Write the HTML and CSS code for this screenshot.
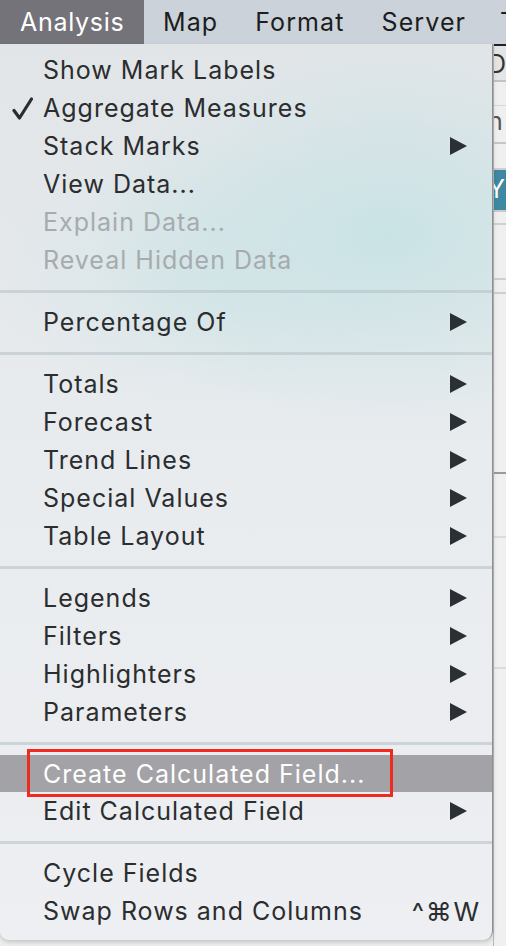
FILE: index.html
```html
<!DOCTYPE html>
<html>
<head>
<meta charset="utf-8">
<link rel="stylesheet" href="styles.css">
</head>
<body>
<div class="menubar">
  <div class="mb-item active">Analysis</div>
  <div class="mb-item">Map</div>
  <div class="mb-item">Format</div>
  <div class="mb-item">Server</div>
  <div class="mb-item cut">T</div>
</div>
<div class="main">
  <div class="menu">
    <div class="group">
      <div class="row"><span class="check"></span><span class="label">Show Mark Labels</span><span class="right"></span></div>
      <div class="row"><span class="check"><svg width="21" height="24" viewBox="0 0 21 24"><path d="M2 13.5 L7.5 21 L19.5 2" fill="none" stroke="#2a2d30" stroke-width="3.2" stroke-linecap="round" stroke-linejoin="round"/></svg></span><span class="label">Aggregate Measures</span><span class="right"></span></div>
      <div class="row"><span class="check"></span><span class="label">Stack Marks</span><span class="right"><i class="arrow"></i></span></div>
      <div class="row"><span class="check"></span><span class="label">View Data...</span><span class="right"></span></div>
      <div class="row disabled"><span class="check"></span><span class="label">Explain Data...</span><span class="right"></span></div>
      <div class="row disabled"><span class="check"></span><span class="label">Reveal Hidden Data</span><span class="right"></span></div>
    </div>
    <div class="sep"></div>
    <div class="group">
      <div class="row"><span class="check"></span><span class="label">Percentage Of</span><span class="right"><i class="arrow"></i></span></div>
    </div>
    <div class="sep"></div>
    <div class="group">
      <div class="row"><span class="check"></span><span class="label">Totals</span><span class="right"><i class="arrow"></i></span></div>
      <div class="row"><span class="check"></span><span class="label">Forecast</span><span class="right"><i class="arrow"></i></span></div>
      <div class="row"><span class="check"></span><span class="label">Trend Lines</span><span class="right"><i class="arrow"></i></span></div>
      <div class="row"><span class="check"></span><span class="label">Special Values</span><span class="right"><i class="arrow"></i></span></div>
      <div class="row"><span class="check"></span><span class="label">Table Layout</span><span class="right"><i class="arrow"></i></span></div>
    </div>
    <div class="sep"></div>
    <div class="group">
      <div class="row"><span class="check"></span><span class="label">Legends</span><span class="right"><i class="arrow"></i></span></div>
      <div class="row"><span class="check"></span><span class="label">Filters</span><span class="right"><i class="arrow"></i></span></div>
      <div class="row"><span class="check"></span><span class="label">Highlighters</span><span class="right"><i class="arrow"></i></span></div>
      <div class="row"><span class="check"></span><span class="label">Parameters</span><span class="right"><i class="arrow"></i></span></div>
    </div>
    <div class="sep"></div>
    <div class="group">
      <div class="row selected"><span class="check"></span><span class="label">Create Calculated Field...</span><span class="right"></span><span class="annot"></span></div>
      <div class="row"><span class="check"></span><span class="label">Edit Calculated Field</span><span class="right"><i class="arrow"></i></span></div>
    </div>
    <div class="sep"></div>
    <div class="group">
      <div class="row"><span class="check"></span><span class="label">Cycle Fields</span><span class="right"></span></div>
      <div class="row"><span class="check"></span><span class="label">Swap Rows and Columns</span><span class="right shortcut">^⌘W</span></div>
    </div>
  </div>
  <div class="app">
    <div class="app-top"></div>
    <div class="app-tab">D</div>
    <div class="app-gap1"></div>
    <div class="app-text">n</div>
    <div class="app-gap2"></div>
    <div class="app-pill">Y</div>
    <div class="app-lines"></div>
    <div class="app-rest"></div>
  </div>
</div>
</body>
</html>
```
FILE: styles.css
```css
* { box-sizing: border-box; }
html, body { margin: 0; padding: 0; }
body {
  width: 506px;
  height: 946px;
  overflow: hidden;
  background: #ededed;
  font-family: Inter, "Liberation Sans", "DejaVu Sans", sans-serif;
  color: #2b2d2f;
}
.menubar {
  height: 44px;
  display: flex;
  align-items: stretch;
  background: #cbd2da;
  font-size: 25px;
  letter-spacing: 1.1px;
  color: #1b1d20;
  overflow: hidden;
}
.mb-item {
  flex: none;
  display: flex;
  align-items: center;
  padding: 0 18px 0 19px;
  white-space: nowrap;
}
.mb-item.active {
  background: #74737a;
  color: #ffffff;
  padding: 0 0 0 20px;
  width: 144px;
  letter-spacing: 0.7px;
}
.mb-item.cut { padding-left: 16px; }
.main {
  display: flex;
  height: 902px;
}
.menu {
  width: 493px;
  flex: none;
  height: 896px;
  padding: 7px 0 9px 0;
  border-right: 1px solid #8d8f92;
  border-radius: 0 0 9px 9px;
  background:
    radial-gradient(ellipse 300px 200px at 390px 190px, rgba(198, 226, 228, 0.9), rgba(198, 226, 228, 0) 100%),
    radial-gradient(ellipse 220px 140px at 200px 230px, rgba(205, 228, 230, 0.6), rgba(205, 228, 230, 0) 100%),
    linear-gradient(180deg, #e2e5e8 0%, #e8ebee 40%, #edeff2 100%);
  box-shadow: 0 2px 4px rgba(0,0,0,0.18);
  font-size: 25px;
  letter-spacing: 1px;
  position: relative;
  z-index: 1;
}
.row {
  height: 38px;
  display: grid;
  grid-template-columns: 43px 1fr 42px;
  align-items: center;
  position: relative;
  color: #2b2d2f;
}
.row.disabled { color: #a6abae; }
.row.selected {
  background: #a3a2a6;
  color: #ffffff;
  margin-top: 1px;
  height: 37px;
}
.check {
  display: flex;
  justify-content: flex-end;
  padding-right: 10px;
  padding-top: 2px;
}
.label { white-space: nowrap; }
.right {
  display: flex;
  justify-content: flex-start;
  align-items: center;
}
.arrow {
  display: block;
  width: 0;
  height: 0;
  border-top: 9px solid transparent;
  border-bottom: 9px solid transparent;
  border-left: 17px solid #2a3033;
}
.shortcut {
  justify-content: flex-end;
  padding-right: 11px;
  margin-left: -100px;
  white-space: nowrap;
  font-size: 26px;
  letter-spacing: 1.8px;
}
.sep {
  height: 3px;
  margin: 11px 0 10px 0;
  background: rgba(180, 192, 196, 0.55);
}
.annot {
  position: absolute;
  left: 27px;
  top: -6px;
  width: 366px;
  height: 48px;
  border: 3px solid #ef2a1f;
}
.app {
  flex: 1;
  display: flex;
  flex-direction: column;
  background: #efefef;
  border-left: 1px solid #b9b9b9;
  font-size: 25px;
  overflow: hidden;
}
.app-top { height: 2px; background: #1e2226; }
.app-tab {
  height: 36px;
  background: #e4e4e4;
  border-bottom: 2px solid #c2c2c2;
  color: #333;
  white-space: nowrap;
  padding-top: 3px;
  margin-left: -6px;
}
.app-gap1 { height: 24px; border-bottom: 1px solid #d8d8d8; }
.app-text {
  height: 38px;
  color: #555;
  white-space: nowrap;
  margin-left: -6px;
  border-bottom: 2px solid #c6c6c6;
}
.app-gap2 { height: 26px; border-bottom: 2px solid #cfcfcf; }
.app-pill {
  height: 40px;
  background: #3e88a2;
  color: #ffffff;
  white-space: nowrap;
  padding-top: 4px;
  margin-left: -6px;
}
.app-lines {
  height: 264px;
  border-top: 2px solid #c9c9c9;
  border-bottom: 2px solid #9a9a9a;
  background:
    linear-gradient(#cfcfcf, #cfcfcf) 0 11px / 100% 2px no-repeat,
    linear-gradient(#cfcfcf, #cfcfcf) 0 66px / 100% 2px no-repeat,
    linear-gradient(#cfcfcf, #cfcfcf) 0 80px / 100% 2px no-repeat;
}
.app-rest {
  flex: 1;
  background:
    linear-gradient(#dcdcdc, #dcdcdc) 0 62px / 100% 2px no-repeat,
    linear-gradient(#dcdcdc, #dcdcdc) 0 193px / 100% 2px no-repeat,
    #f0f0f0;
}
```
